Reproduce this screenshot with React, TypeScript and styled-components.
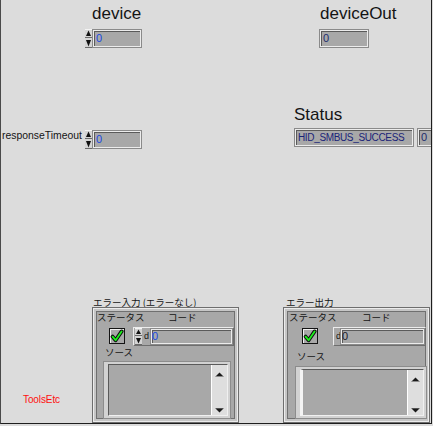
import React from "react";
import styled, { createGlobalStyle } from "styled-components";

const Global = createGlobalStyle`
  html, body { margin: 0; padding: 0; background: #dcdcdc; }
  body {
    width: 433px; height: 426px; overflow: hidden;
    font-family: "Liberation Sans", Arial, sans-serif;
  }
`;

const Window = styled.div`
  position: relative;
  box-sizing: border-box;
  width: 432px;
  height: 424px;
  overflow: hidden;
  background: #dcdcdc;
  border-left: 1px solid #4a4a4a;
  border-right: 1px solid #1e1e1e;
  border-bottom: 1px solid #1e1e1e;
`;

/* a front-panel object placed on the free LabVIEW canvas */
const Node = styled.div<{ $x: number; $y: number }>`
  position: absolute;
  left: ${(p) => p.$x - 1}px;
  top: ${(p) => p.$y}px;
`;

const BigLabel = styled.div`
  font-family: "Liberation Sans", Arial, sans-serif;
  font-size: 17px;
  line-height: 20px;
  color: #141414;
  white-space: nowrap;
`;

const SmallLabel = styled.div`
  font-family: "Liberation Sans", Arial, sans-serif;
  font-size: 10.4px;
  line-height: 12px;
  color: #141414;
  white-space: nowrap;
`;

const JpLabel = styled.span<{ $w?: number }>`
  display: inline-block;
  font-family: "Noto Sans CJK JP", "Liberation Sans", sans-serif;
  font-size: 9.5px;
  line-height: 12px;
  color: #141414;
  white-space: nowrap;
  ${(p) => (p.$w ? `width: ${p.$w}px;` : "")}
`;

const RedTag = styled.div`
  font-family: "Liberation Sans", Arial, sans-serif;
  font-size: 10px;
  line-height: 12px;
  letter-spacing: -0.1px;
  color: #ff1010;
`;

const Row = styled.div<{ $mt?: number; $ml?: number }>`
  display: flex;
  align-items: flex-start;
  margin-top: ${(p) => p.$mt ?? 0}px;
  margin-left: ${(p) => p.$ml ?? 0}px;
`;

const Display = styled.div<{
  $w?: number;
  $h?: number;
  $color?: string;
  $pad?: number;
  $grow?: boolean;
  $spacing?: number;
  $size?: number;
}>`
  box-sizing: border-box;
  ${(p) => (p.$grow ? "flex: 1;" : `width: ${p.$w}px;`)}
  height: ${(p) => p.$h ?? 19}px;
  background: #a8a8a8;
  border: 1px solid #8a8a8a;
  box-shadow: inset 1px 1px 0 #ececec, inset -1px -1px 0 #ececec,
    inset 2px 2px 0 #5a5a5a;
  padding-left: ${(p) => p.$pad ?? 3}px;
  font-family: "Liberation Sans", Arial, sans-serif;
  font-size: ${(p) => p.$size ?? 11}px;
  letter-spacing: ${(p) => p.$spacing ?? 0}px;
  line-height: ${(p) => (p.$h ?? 19) - 2}px;
  color: ${(p) => p.$color ?? "#1848e0"};
  white-space: nowrap;
  overflow: hidden;
`;

const SpinWrap = styled.div<{ $h: number }>`
  width: 7px;
  height: ${(p) => p.$h}px;
  flex: none;
  display: flex;
`;

const Spinner = ({ h = 19 }: { h?: number }) => {
  const half = Math.floor(h / 2);
  const b = h - half;
  return (
    <SpinWrap $h={h}>
      <svg width="7" height={h} viewBox={`0 0 7 ${h}`}>
        <rect x="0" y="0" width="7" height={half} fill="#d4d4d4" />
        <rect x="0" y="0" width="7" height="1" fill="#f4f4f4" />
        <rect x="0" y={half - 1} width="7" height="1" fill="#6a6a6a" />
        <polygon points={`1,${half - 2} 6,${half - 2} 3.5,1.5`} fill="#111" />
        <rect x="0" y={half} width="7" height={b} fill="#d4d4d4" />
        <rect x="0" y={h - 1} width="7" height="1" fill="#6a6a6a" />
        <polygon points={`1,${half + 2} 6,${half + 2} 3.5,${h - 1.5}`} fill="#111" />
      </svg>
    </SpinWrap>
  );
};

const ClusterFrame = styled.div<{ $w: number; $h: number; $pl: number }>`
  box-sizing: border-box;
  width: ${(p) => p.$w}px;
  height: ${(p) => p.$h}px;
  background: #a8a8a8;
  border: 1px solid #6e6e6e;
  box-shadow: inset 0 0 0 1px #ececec, inset 0 0 0 3px #c6c6c6,
    inset 0 0 0 4px #707070;
  padding: 3px 0 0 ${(p) => p.$pl}px;
  display: flex;
  flex-direction: column;
`;

const CheckBox = styled.div<{ $ml: number }>`
  box-sizing: border-box;
  width: 16px;
  height: 16px;
  margin-top: 1px;
  margin-left: ${(p) => p.$ml}px;
  border: 1px solid #141414;
  background: #a8a8a8;
  box-shadow: inset 1px 1px 0 #f0f0f0;
  display: flex;
  flex: none;
`;

const CodeFrame = styled.div<{ $ml: number; $w: number; $pl: number }>`
  box-sizing: border-box;
  display: flex;
  width: ${(p) => p.$w}px;
  height: 19px;
  margin-left: ${(p) => p.$ml}px;
  padding: 0 0 0 ${(p) => p.$pl}px;
  border: 1px solid;
  border-color: #ececec #6e6e6e #6e6e6e #ececec;
  flex: none;
`;

const Radix = styled.span<{ $w: number; $pl: number }>`
  width: ${(p) => p.$w}px;
  padding-left: ${(p) => p.$pl}px;
  flex: none;
  font-family: "Liberation Sans", Arial, sans-serif;
  font-size: 9px;
  line-height: 17px;
  color: #141414;
`;

const SourceBox = styled.div<{ $ml: number; $mt: number; $w: number; $h: number }>`
  box-sizing: border-box;
  width: ${(p) => p.$w}px;
  height: ${(p) => p.$h}px;
  margin: ${(p) => p.$mt}px 0 0 ${(p) => p.$ml}px;
  border: 1px solid #8c8c8c;
  background: #d2d2d2;
  padding: 2px 2px 2px 4px;
  display: flex;
  flex: none;
`;

const SourceInner = styled.div<{ $ind: boolean }>`
  flex: 1;
  display: flex;
  justify-content: flex-end;
  background: #a8a8a8;
  border-top: 1px solid #5a5a5a;
  border-left: ${(p) => (p.$ind ? "3px solid #f4f4f4" : "1px solid #5a5a5a")};
  border-right: 1px solid #f0f0f0;
  border-bottom: 1px solid #f0f0f0;
`;

const ScrollBar = styled.div`
  width: 15px;
  background: #dedede;
  border-left: 1px solid #ffffff;
  display: flex;
  flex-direction: column;
  justify-content: space-between;
  align-items: center;
  padding: 7px 0 2px;
`;

const ArrowUp = () => (
  <svg width="9" height="5" viewBox="0 0 9 5">
    <polygon points="0.5,4.5 8.5,4.5 4.5,0.5" fill="#1a1a1a" />
    <rect x="0.5" y="4" width="8" height="1" fill="#8a8a8a" />
  </svg>
);

const ArrowDown = () => (
  <svg width="9" height="5" viewBox="0 0 9 5">
    <rect x="0.5" y="0" width="8" height="1" fill="#8a8a8a" />
    <polygon points="0.5,0.5 8.5,0.5 4.5,4.5" fill="#1a1a1a" />
  </svg>
);

const Check = () => (
  <svg width="14" height="14" viewBox="0 0 14 14">
    <path
      d="M2.6 7.6 L5.6 11.2 L11.6 2.4"
      fill="none"
      stroke="#0c0c0c"
      strokeWidth="3.8"
      strokeLinecap="round"
      strokeLinejoin="round"
    />
    <path
      d="M2.6 7.6 L5.6 11.2 L11.6 2.4"
      fill="none"
      stroke="#1cf01c"
      strokeWidth="1.8"
      strokeLinecap="round"
      strokeLinejoin="round"
    />
  </svg>
);

type ClusterLayout = {
  pl: number;
  label1W: number;
  checkML: number;
  codeML: number;
  codeW: number;
  srcLabelML: number;
  srcLabelMT: number;
  srcML: number;
  srcMT: number;
  srcW: number;
  srcH: number;
  control: boolean;
};

const ErrorCluster = ({ l }: { l: ClusterLayout }) => (
  <ClusterFrame $w={147} $h={116} $pl={l.pl}>
    <Row>
      <JpLabel $w={l.label1W}>ステータス</JpLabel>
      <JpLabel>コード</JpLabel>
    </Row>
    <Row $mt={4}>
      <CheckBox $ml={l.checkML}>
        <Check />
      </CheckBox>
      <CodeFrame $ml={l.codeML} $w={l.codeW} $pl={l.control ? 1 : 2}>
        {l.control && <Spinner h={17} />}
        <Radix $w={l.control ? 6 : 4} $pl={l.control ? 2 : 0}>
          d
        </Radix>
        <Display $grow $h={17} $pad={1} $color={l.control ? "#1848e0" : "#1a1a2a"}>
          0
        </Display>
      </CodeFrame>
    </Row>
    <Row $mt={l.srcLabelMT} $ml={l.srcLabelML}>
      <JpLabel>ソース</JpLabel>
    </Row>
    <SourceBox $ml={l.srcML} $mt={l.srcMT} $w={l.srcW} $h={l.srcH}>
      <SourceInner $ind={!l.control}>
        <ScrollBar>
          <ArrowUp />
          <ArrowDown />
        </ScrollBar>
      </SourceInner>
    </SourceBox>
  </ClusterFrame>
);

const errorIn: ClusterLayout = {
  pl: 4,
  label1W: 71,
  checkML: 12,
  codeML: 8,
  codeW: 101,
  srcLabelML: 8,
  srcLabelMT: 0,
  srcML: 6,
  srcMT: 3,
  srcW: 128,
  srcH: 58,
  control: true,
};

const errorOut: ClusterLayout = {
  pl: 5,
  label1W: 73,
  checkML: 13,
  codeML: 15,
  codeW: 93,
  srcLabelML: 8,
  srcLabelMT: 4,
  srcML: 6,
  srcMT: 4,
  srcW: 132,
  srcH: 53,
  control: false,
};

export default function App() {
  return (
    <>
      <Global />
      <Window>
        <Node $x={92} $y={4}>
          <BigLabel>device</BigLabel>
        </Node>
        <Node $x={85} $y={29}>
          <Row>
            <Spinner />
            <Display $w={50}>0</Display>
          </Row>
        </Node>

        <Node $x={320} $y={4}>
          <BigLabel>deviceOut</BigLabel>
        </Node>
        <Node $x={319} $y={29}>
          <Display $w={50} $color="#1c2c6c">
            0
          </Display>
        </Node>

        <Node $x={2} $y={130}>
          <SmallLabel>responseTimeout</SmallLabel>
        </Node>
        <Node $x={85} $y={130}>
          <Row>
            <Spinner />
            <Display $w={50}>0</Display>
          </Row>
        </Node>

        <Node $x={294} $y={105}>
          <BigLabel>Status</BigLabel>
        </Node>
        <Node $x={294} $y={128}>
          <Row>
            <Display $w={120} $size={10} $spacing={-0.35} $color="#1a2478">
              HID_SMBUS_SUCCESS
            </Display>
            <Row $ml={3}>
              <Display $w={20} $color="#1c2c6c">
                0
              </Display>
            </Row>
          </Row>
        </Node>

        <Node $x={93} $y={292}>
          <JpLabel>エラー入力 (エラーなし)</JpLabel>
        </Node>
        <Node $x={92} $y={307}>
          <ErrorCluster l={errorIn} />
        </Node>

        <Node $x={286} $y={292}>
          <JpLabel>エラー出力</JpLabel>
        </Node>
        <Node $x={283} $y={307}>
          <ErrorCluster l={errorOut} />
        </Node>

        <Node $x={23} $y={394}>
          <RedTag>ToolsEtc</RedTag>
        </Node>
      </Window>
    </>
  );
}
